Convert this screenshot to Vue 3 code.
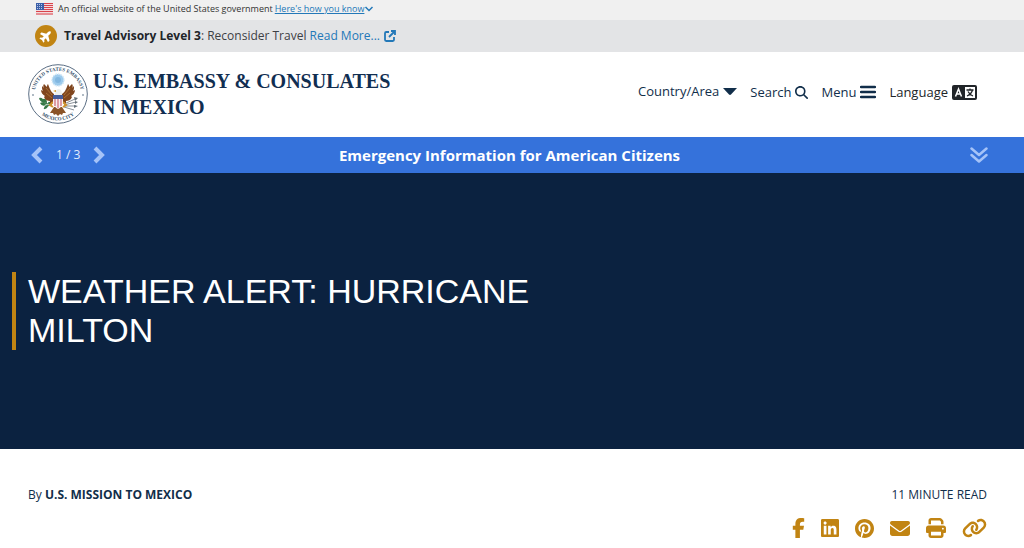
<template>
  <div class="page">
    <div class="gov">
      <svg class="flag" viewBox="0 0 17 12" aria-hidden="true">
        <rect width="17" height="12" fill="#f3d9dc" />
        <path d="M0 .5h17M0 2.5h17M0 4.5h17M0 6.5h17M0 8.5h17M0 11h17" stroke="#d9444b" />
        <rect width="8" height="7" fill="#3b5fa8" />
        <path d="M1 1.5h6M1 3.5h6M1 5.5h6" stroke="#b8c7e6" stroke-dasharray="1 1" />
      </svg>
      <span>An official website of the United States government</span>
      <a href="#" class="gov-link">Here's how you know
        <svg class="gov-chevron" viewBox="0 0 10 8" aria-hidden="true"><path d="M1.5 2L5 5.5 8.5 2" fill="none" stroke="currentColor" stroke-width="1.5" /></svg>
      </a>
    </div>

    <div class="advisory">
      <svg class="plane" viewBox="0 0 22 22" aria-hidden="true">
        <circle cx="11" cy="11" r="11" fill="#c18413" />
        <g transform="translate(11 11) rotate(-45) scale(.0225) translate(-288 -256)">
          <path fill="#fff" :d="icons.plane" />
        </g>
      </svg>
      <p><strong>Travel Advisory Level 3</strong>: Reconsider Travel <a href="#">Read More...</a></p>
      <svg class="external" viewBox="0 0 12 12" aria-hidden="true">
        <path d="M5 2H2.2Q1 2 1 3.2v6.6Q1 11 2.2 11h6.6Q10 11 10 9.800V7M7 1h4v4M11 1L5 7" fill="none" stroke="currentColor" stroke-width="1.8" />
      </svg>
    </div>

    <header class="masthead">
      <a href="#" class="brand">
        <svg class="seal" viewBox="0 0 60 60" aria-hidden="true">
          <defs>
            <path id="arc-top" d="M7 33a23.200 23.200 0 1 1 46 0" />
            <path id="arc-bottom" d="M3.5 30a26.500 26.500 0 0 0 53 0" />
          </defs>
          <circle cx="30" cy="30" r="29.3" fill="#fff" stroke="#5b6e84" stroke-width="1" />
          <text class="seal-text"><textPath href="#arc-top" startOffset="50%" text-anchor="middle">UNITED STATES EMBASSY</textPath></text>
          <text class="seal-text"><textPath href="#arc-bottom" startOffset="50%" text-anchor="middle">MEXICO CITY</textPath></text>
          <circle cx="5" cy="31" r=".7" fill="#23405c" />
          <circle cx="55" cy="31" r=".7" fill="#23405c" />
          <!-- glory of stars -->
          <circle cx="30" cy="16" r="6" fill="#9dcbed" stroke="#d3e8f6" stroke-width="1.5" stroke-dasharray="1.5 1" />
          <circle cx="30" cy="16" r="3" fill="#82b7e0" />
          <!-- olive branch and arrows -->
          <path d="M23 39q-5 3-11-4M24 41q-5 0-8 4" fill="none" stroke="#3c7b4a" stroke-width="1.2" />
          <path d="M11 34q4-1 5 4-4 0-5-4zM15 35q4-1 4 4-4 0-4-4zM12 39q4-2 6 2-4 2-6-2zM16 45q0-4 4-4 0 4-4 4zM20 38q3-1 4 2-3 2-4-2z" fill="#347845" />
          <path d="M36 40l11-5M36 41l12-3M36 42l12 0M36 43l10 3" stroke="#8a9097" stroke-width="1" />
          <path d="M46 33l4 1-3 3zM47 37l3 1-3 2zM46 41l4 1-4 2z" fill="#65717a" />
          <!-- eagle -->
          <path d="M26 43l-4 6 3 0 1 2 2-1 2 2 2-2 2 1 1-2 3 0-4-6z" fill="#8b5428" />
          <path d="M26 30c-2-1-4-4-6-10-1 1-1 2-1 3l-3-3c-1 1-1 3 0 4l-2-2c0 2 0 4 1 5l-2-1c0 3 2 5 4 6l-1 1c1 3 4 4 6 4l0 2c2 1 4 0 5-1z" fill="#80461f" />
          <path d="M34 30c2-1 4-4 6-10 1 1 1 2 1 3l3-3c1 1 1 3 0 4l2-2c0 2 0 4-1 5l2-1c0 3-2 5-4 6l1 1c-1 3-4 4-6 4l0 2c-2 1-4 0-5-1z" fill="#80461f" />
          <path d="M18 24l6 7M18 29l6 5M42 24l-6 7M42 29l-6 5" stroke="#b9803d" stroke-width=".7" />
          <path d="M25 38l-3 3 3 2M35 38l3 3-3 2" fill="none" stroke="#d0922b" stroke-width="2" />
          <path d="M27 31q0-5 3-6 4-1 4 6z" fill="#edf0ef" />
          <path d="M28 26l-3 1 3 1z" fill="#d39a28" />
          <path d="M25 31h10v8q-1 4-5 6-4-2-5-6z" fill="#f6eef0" />
          <path d="M27 34v8M30 34v10M33 34v8" stroke="#d2737f" stroke-width="1.3" />
          <path d="M25 31h10v4H25z" fill="#455d9b" />
        </svg>
        <span class="brand-name">U.S. EMBASSY &amp; CONSULATES<br />IN MEXICO</span>
      </a>
      <nav class="nav">
        <button type="button" class="country">Country/Area
          <svg class="caret" viewBox="0 0 14 7" aria-hidden="true"><path d="M0 0h14L8 6.5Q7 7.300 6 6.5z" fill="currentColor" /></svg>
        </button>
        <button type="button">Search
          <svg class="glass" viewBox="0 0 512 512" aria-hidden="true"><path :d="icons.search" fill="currentColor" /></svg>
        </button>
        <button type="button">Menu
          <svg class="bars" viewBox="0 0 16 14" aria-hidden="true"><path d="M1 2h14M1 7h14M1 12h14" stroke="currentColor" stroke-width="2.5" stroke-linecap="round" /></svg>
        </button>
        <button type="button" class="language">Language
          <svg class="lang" viewBox="0 0 25 15" aria-hidden="true">
            <rect width="25" height="15" rx="2" fill="currentColor" />
            <path d="M3.5 11.5L6.5 4 9.5 11.5M4.5 9h4" fill="none" stroke="#fff" stroke-width="1.5" />
            <rect x="13" y="2" width="10" height="11" fill="#fff" />
            <path d="M14.5 5h7M18 3.5V5M20.5 5q-1 4-5.5 6M16 6.5q1.5 3 5 4.5" fill="none" stroke="currentColor" stroke-width="1.3" />
          </svg>
        </button>
      </nav>
    </header>

    <section class="emergency">
      <div class="pager">
        <button type="button" aria-label="Previous alert">
          <svg class="arrow" viewBox="0 0 12 18" aria-hidden="true"><path d="M10 2L3 9l7 7" fill="none" stroke="currentColor" stroke-width="4" /></svg>
        </button>
        <span>1 / 3</span>
        <button type="button" aria-label="Next alert">
          <svg class="arrow" viewBox="0 0 12 18" aria-hidden="true"><path d="M2 2l7 7-7 7" fill="none" stroke="currentColor" stroke-width="4" /></svg>
        </button>
      </div>
      <h2>Emergency Information for American Citizens</h2>
      <button type="button" class="expand" aria-label="Expand alert">
        <svg class="double" viewBox="0 0 18 16" aria-hidden="true"><path d="M1.5 1.5L9 8l7.5-6.5M1.5 8L9 14.5 16.5 8" fill="none" stroke="currentColor" stroke-width="2.5" stroke-linecap="round" stroke-linejoin="round" /></svg>
      </button>
    </section>

    <section class="hero">
      <h1>WEATHER ALERT: HURRICANE MILTON</h1>
    </section>

    <div class="meta">
      <p class="byline">By <a href="#">U.S. MISSION TO MEXICO</a></p>
      <div class="meta-side">
        <p>11 MINUTE READ</p>
        <div class="share">
          <a v-for="s in share" :key="s.label" href="#" :aria-label="s.label">
            <svg :class="s.name" :viewBox="s.box" aria-hidden="true"><path :d="icons[s.name]" fill="currentColor" /></svg>
          </a>
        </div>
      </div>
    </div>
  </div>
</template>

<script setup>
const share = [
  { name: 'facebook', label: 'Share on Facebook', box: '0 0 320 512' },
  { name: 'linkedin', label: 'Share on LinkedIn', box: '0 32 448 448' },
  { name: 'pinterest', label: 'Share on Pinterest', box: '0 8 496 496' },
  { name: 'envelope', label: 'Share by email', box: '0 64 512 384' },
  { name: 'print', label: 'Print', box: '0 0 512 512' },
  { name: 'link', label: 'Copy link', box: '0 0 640 512' }
];

const icons = {
  plane: 'M482.3 192c34.2 0 93.7 29 93.7 64c0 36-59.5 64-93.7 64l-116.6 0L265.2 495.9c-5.7 10-16.3 16.1-27.8 16.1l-56.2 0c-10.6 0-18.3-10.2-15.4-20.4l49-171.6L112 320 68.8 377.6c-3 4-7.8 6.4-12.8 6.4l-42 0c-7.8 0-14-6.3-14-14c0-1.3 .2-2.6 .5-3.9L32 256 .5 145.9c-.4-1.3-.5-2.6-.5-3.9c0-7.8 6.3-14 14-14l42 0c5 0 9.8 2.4 12.8 6.4L112 192l102.9 0-49-171.6C162.9 10.2 170.6 0 181.2 0l56.2 0c11.5 0 22.1 6.2 27.8 16.1L365.7 192l116.6 0z',
  search: 'M416 208c0 45.9-14.9 88.3-40 122.7L502.6 457.4c12.5 12.5 12.5 32.8 0 45.3s-32.8 12.5-45.3 0L330.7 376c-34.4 25.2-76.8 40-122.7 40C93.1 416 0 322.9 0 208S93.1 0 208 0S416 93.1 416 208zM208 352a144 144 0 1 0 0-288 144 144 0 1 0 0 288z',
  facebook: 'M80 299.3V512H196V299.3h86.5l18-97.8H196V166.9c0-51.7 20.3-71.5 72.7-71.5c16.3 0 29.4 .4 37 1.2V7.9C291.4 4 256.4 0 236.2 0C129.3 0 80 50.5 80 159.4v42.1H14v97.8H80z',
  linkedin: 'M416 32H31.9C14.3 32 0 46.5 0 64.3v383.4C0 465.5 14.3 480 31.9 480H416c17.6 0 32-14.5 32-32.3V64.3c0-17.8-14.4-32.3-32-32.3zM135.4 416H69V202.2h66.5V416zm-33.2-243c-21.3 0-38.5-17.3-38.5-38.5S80.9 96 102.2 96c21.2 0 38.5 17.3 38.5 38.5 0 21.3-17.2 38.5-38.5 38.5zm282.1 243h-66.4V312c0-24.8-.5-56.7-34.5-56.7-34.6 0-39.9 27-39.9 54.9V416h-66.4V202.2h63.7v29.2h.9c8.9-16.8 30.6-34.5 62.9-34.5 67.2 0 79.7 44.3 79.7 101.9V416z',
  pinterest: 'M496 256c0 137-111 248-248 248-25.6 0-50.2-3.9-73.4-11.1 10.1-16.5 25.2-43.5 30.8-65 3-11.6 15.4-59 15.4-59 8.1 15.4 31.7 28.5 56.8 28.5 74.8 0 128.7-68.8 128.7-154.3 0-81.9-66.9-143.2-152.9-143.2-107 0-163.9 71.8-163.9 150.1 0 36.4 19.4 81.7 50.3 96.1 4.7 2.2 7.2 1.2 8.3-3.3.8-3.4 5-20.3 6.9-28.1.6-2.5.3-4.7-1.7-7.1-10.1-12.5-18.3-35.3-18.3-56.6 0-54.7 41.4-107.6 112-107.6 60.9 0 103.6 41.5 103.6 100.9 0 67.1-33.9 113.6-78 113.6-24.3 0-42.6-20.1-36.7-44.8 7-29.5 20.5-61.3 20.5-82.6 0-19-10.2-34.9-31.4-34.9-24.9 0-44.9 25.7-44.9 60.2 0 22 7.4 36.8 7.4 36.8s-24.5 103.8-29 123.2c-5 21.4-3 51.6-.9 71.2C65.4 450.9 0 361.1 0 256 0 119 111 8 248 8s248 111 248 248z',
  envelope: 'M48 64C21.5 64 0 85.5 0 112c0 15.1 7.1 29.3 19.2 38.4L236.8 313.6c11.4 8.5 27 8.5 38.4 0L492.8 150.4c12.1-9.1 19.2-23.3 19.2-38.4c0-26.5-21.5-48-48-48H48zM0 176V384c0 35.3 28.7 64 64 64H448c35.3 0 64-28.7 64-64V176L294.4 339.2c-22.8 17.1-54 17.1-76.8 0L0 176z',
  print: 'M128 0C92.7 0 64 28.7 64 64v96h64V64H354.7L384 93.3V160h64V93.3c0-17-6.7-33.3-18.7-45.3L400 18.7C388 6.7 371.7 0 354.7 0H128zM384 352v32 64H128V384 368 352H384zm64 32h32c17.7 0 32-14.3 32-32V256c0-35.3-28.7-64-64-64H64c-35.3 0-64 28.7-64 64v96c0 17.7 14.3 32 32 32H64v64c0 35.3 28.7 64 64 64H384c35.3 0 64-28.7 64-64V384zM432 248a24 24 0 1 1 0 48 24 24 0 1 1 0-48z',
  link: 'M579.8 267.7c56.5-56.5 56.5-148 0-204.5c-50-50-128.8-56.5-186.3-15.4l-1.6 1.1c-14.4 10.3-17.7 30.3-7.4 44.6s30.3 17.7 44.6 7.4l1.6-1.1c32.1-22.9 76-19.3 103.8 8.6c31.5 31.5 31.5 82.5 0 114L422.3 334.8c-31.5 31.5-82.5 31.5-114 0c-27.9-27.9-31.5-71.8-8.6-103.8l1.1-1.6c10.3-14.4 6.9-34.4-7.4-44.6s-34.4-6.9-44.6 7.4l-1.1 1.6C206.5 251.2 213 330 263 380c56.5 56.5 148 56.5 204.5 0L579.8 267.7zM60.2 244.3c-56.5 56.5-56.5 148 0 204.5c50 50 128.8 56.5 186.3 15.4l1.6-1.1c14.4-10.3 17.7-30.3 7.4-44.6s-30.3-17.7-44.6-7.4l-1.6 1.1c-32.1 22.9-76 19.3-103.8-8.6C74 372 74 321 105.5 289.5L217.7 177.2c31.5-31.5 82.5-31.5 114 0c27.9 27.9 31.5 71.8 8.6 103.9l-1.1 1.6c-10.3 14.4-6.9 34.4 7.4 44.6s34.4 6.9 44.6-7.4l1.1-1.6C433.5 260.8 427 182 377 132c-56.5-56.5-148-56.5-204.5 0L60.2 244.3z'
};
</script>

<style>
body { margin: 0; background: #fff; }
</style>

<style scoped>
.page { font-family: "Open Sans", "Noto Sans", sans-serif; font-size: 13px; color: #112e4a; }
p, h1, h2 { margin: 0; }
svg { display: block; flex: none; }
button {
  display: flex; align-items: center;
  border: none; background: transparent; padding: 0;
  font: inherit; color: inherit; cursor: pointer;
}
a { color: #2378b8; text-decoration: none; }

.gov {
  display: flex; align-items: center;
  padding: 1px 36px 3px;
  background: #f0f0f0; color: #333; font-size: 9px; line-height: 16px;
}
.flag { width: 17px; height: 12px; margin-right: 5px; }
.gov-link { display: flex; align-items: center; margin-left: 2px; text-decoration: underline; }
.gov-chevron { width: 10px; height: 8px; }

.advisory {
  display: flex; align-items: center;
  padding: 5px 35px;
  background: #e3e4e6; color: #3d4045; font-size: 12px; line-height: 20px;
}
.advisory strong { color: #212529; }
.plane { width: 22px; height: 22px; margin-right: 7px; }
.external { width: 12px; height: 12px; margin-left: 4px; color: #2378b8; }

.masthead {
  display: flex; align-items: center; justify-content: space-between;
  padding: 12px 47px 12px 28px;
}
.brand { display: flex; align-items: center; gap: 5px; color: #112e51; }
.seal { width: 60px; height: 60px; }
.seal-text { font: bold 5px "Liberation Serif", serif; fill: #34506b; }
.brand-name { font: bold 20px/26px "Liberation Serif", serif; }
.nav { display: flex; align-items: center; gap: 13px; padding-bottom: 4px; }
.nav button { gap: 4px; line-height: 18px; }
.nav .country { padding-bottom: 2px; }
.caret { width: 14px; height: 7px; }
.glass { width: 13px; height: 13px; }
.bars { width: 16px; height: 14px; }
.nav .language { color: #212529; }
.lang { width: 25px; height: 15px; }

.emergency {
  display: grid; grid-template-columns: 1fr auto 1fr; align-items: center;
  padding: 8px 36px 8px 31px; margin-top: 1px;
  background: #3572db; color: #fff;
}
.emergency h2 { font-size: 15px; line-height: 20px; }
.pager { display: flex; align-items: center; gap: 13px; font-size: 12px; line-height: 20px; color: #e3ecfb; }
.pager button, .expand { color: #a5c3f8; }
.arrow { width: 12px; height: 18px; }
.expand { justify-self: end; }
.double { width: 18px; height: 16px; }

.hero {
  display: flex; align-items: center;
  min-height: 276px; padding: 0 12px;
  background: #0b2240;
}
.hero h1 {
  max-width: 560px; padding-left: 12px;
  border-left: 4px solid #c18413;
  color: #fff; font: 34px/39px "Liberation Sans", Arial, sans-serif;
}

.meta { display: flex; justify-content: space-between; padding: 36px 37px 8px 28px; font-size: 12px; line-height: 20px; }
.byline a { color: #112e4a; font-weight: 700; }
.meta-side { display: grid; justify-items: end; gap: 13px; }
.share { display: flex; align-items: center; gap: 16px; }
.share a { color: #c18413; }
.facebook { width: 13px; height: 20px; }
.linkedin { width: 18px; height: 18px; }
.pinterest { width: 19px; height: 19px; }
.envelope { width: 20px; height: 15px; }
.print { width: 20px; height: 20px; }
.link { width: 25px; height: 20px; }
</style>
